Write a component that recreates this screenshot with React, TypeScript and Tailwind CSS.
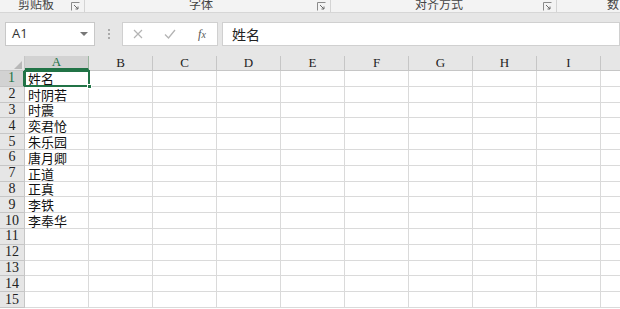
import React from 'react';

const cols = ['A', 'B', 'C', 'D', 'E', 'F', 'G', 'H', 'I', 'J'];
const names = ['姓名', '时阴若', '时震', '奕君怆', '朱乐园', '唐月卿', '正道', '正真', '李铁', '李奉华'];
const rows = Array.from({ length: 15 }, (_, i) => i + 1);

const cjk = { fontFamily: '"Noto Sans CJK SC", "Noto Sans", sans-serif' };
const serif = { fontFamily: '"Liberation Serif", "DejaVu Serif", serif' };

function Launcher() {
  return (
    <svg width="9" height="9" viewBox="0 0 9 9" className="shrink-0">
      <path d="M0.5 8.5V0.5H8.5" fill="none" stroke="#8a8a8a" strokeWidth="1" />
      <path d="M3 3L7 7M7 4.5V7H4.5" fill="none" stroke="#6a6a6a" strokeWidth="1" />
    </svg>
  );
}

function RibbonGroup({ label, width, labelLeft }: { label: string; width: number; labelLeft: number }) {
  return (
    <div className="relative h-full shrink-0 border-r border-[#d4d4d4]" style={{ width }}>
      <span className="absolute top-[-4px] text-[12px] leading-[16px] text-[#444]" style={{ left: labelLeft, ...cjk }}>
        {label}
      </span>
      <div className="absolute right-[4px] top-[2px]">
        <Launcher />
      </div>
    </div>
  );
}

export default function App() {
  return (
    <div className="w-[620px] h-[309px] overflow-hidden bg-[#e6e6e6] flex flex-col select-none">
      {/* ribbon group labels */}
      <div className="h-[13px] bg-[#f3f3f3] border-b border-[#d6d6d6] flex shrink-0 overflow-hidden">
        <RibbonGroup label="剪贴板" width={85} labelLeft={18} />
        <RibbonGroup label="字体" width={246} labelLeft={104} />
        <RibbonGroup label="对齐方式" width={226} labelLeft={84} />
        <div className="relative h-full flex-1">
          <span className="absolute top-[-4px] left-[50px] text-[12px] leading-[16px] text-[#444]" style={cjk}>数字</span>
        </div>
      </div>

      {/* formula bar */}
      <div className="h-[43px] shrink-0 flex items-start pt-[9px] pl-[5px]">
        <div className="w-[90px] h-[24px] bg-white border border-[#c8c8c8] flex items-center justify-between pl-[6px] pr-[6px]">
          <span className="text-[13px] text-[#333]" style={{ fontFamily: '"Open Sans", "Noto Sans", sans-serif' }}>A1</span>
          <svg width="8" height="5" viewBox="0 0 8 5">
            <path d="M0 0H8L4 4Z" fill="#777" />
          </svg>
        </div>
        <div className="w-[27px] h-[24px] flex flex-col items-center justify-center gap-[2px]">
          <span className="w-[2px] h-[2px] bg-[#aaa]" />
          <span className="w-[2px] h-[2px] bg-[#aaa]" />
          <span className="w-[2px] h-[2px] bg-[#aaa]" />
        </div>
        <div className="w-[96px] h-[24px] bg-white border border-[#d0d0d0] flex items-center">
          <div className="w-[30px] flex justify-center">
            <svg width="10" height="10" viewBox="0 0 10 10">
              <path d="M1 1L9 9M9 1L1 9" stroke="#b4b4b4" strokeWidth="1.2" />
            </svg>
          </div>
          <div className="w-[34px] flex justify-center">
            <svg width="12" height="10" viewBox="0 0 12 10">
              <path d="M1 5.5L4.5 9L11 1" fill="none" stroke="#b4b4b4" strokeWidth="1.3" />
            </svg>
          </div>
          <div className="w-[30px] flex justify-center">
            <span className="text-[12px] italic text-[#555]" style={serif}>
              f<span className="text-[10px]">x</span>
            </span>
          </div>
        </div>
        <div className="ml-[4px] flex-1 h-[24px] bg-white border border-[#d0d0d0] flex items-center pl-[9px]">
          <span className="text-[14px] text-[#222]" style={cjk}>姓名</span>
        </div>
      </div>

      {/* grid */}
      <div className="flex-1 bg-white relative">
        {/* column headers */}
        <div className="flex h-[15px] bg-[#e6e6e6] border-b border-[#c6c6c6]">
          <div className="w-[25px] shrink-0 h-full relative border-r border-[#c6c6c6]">
            <svg width="8" height="8" viewBox="0 0 8 8" className="absolute right-[2px] bottom-[1px]">
              <path d="M8 0V8H0Z" fill="#b8b8b8" />
            </svg>
          </div>
          {cols.map((c, i) => (
            <div
              key={c}
              className={`w-[64px] shrink-0 h-full flex items-center justify-center text-[13px] border-r ${
                i === 0 ? 'bg-[#d2d2d2] text-[#217346] border-[#9ab59f] border-b-2 border-b-[#217346]' : 'text-[#222] border-[#c6c6c6]'
              }`}
              style={serif}
            >
              {c}
            </div>
          ))}
        </div>
        {rows.map((r) => (
          <div key={r} className="flex h-[15.8px]">
            <div
              className={`w-[25px] shrink-0 h-full flex items-center justify-center text-[14px] leading-none border-r border-b border-[#c6c6c6] ${
                r === 1 ? 'bg-[#d2d2d2] text-[#217346] border-r-2 border-r-[#217346]' : 'bg-[#e6e6e6] text-[#222]'
              }`}
              style={serif}
            >
              {r}
            </div>
            {cols.map((c, i) => (
              <div
                key={c}
                className="w-[64px] shrink-0 h-full border-r border-b border-[#dadada] flex items-center pl-[3px] text-[13px] text-[#111] leading-none"
                style={cjk}
              >
                {i === 0 ? names[r - 1] : ''}
              </div>
            ))}
          </div>
        ))}
        {/* selection on A1 */}
        <div className="absolute left-[24px] top-[14px] w-[66px] h-[17px] border-2 border-[#217346] pointer-events-none">
          <div className="absolute right-[-4px] bottom-[-4px] w-[5px] h-[5px] bg-[#217346] border border-white" />
        </div>
      </div>
    </div>
  );
}
